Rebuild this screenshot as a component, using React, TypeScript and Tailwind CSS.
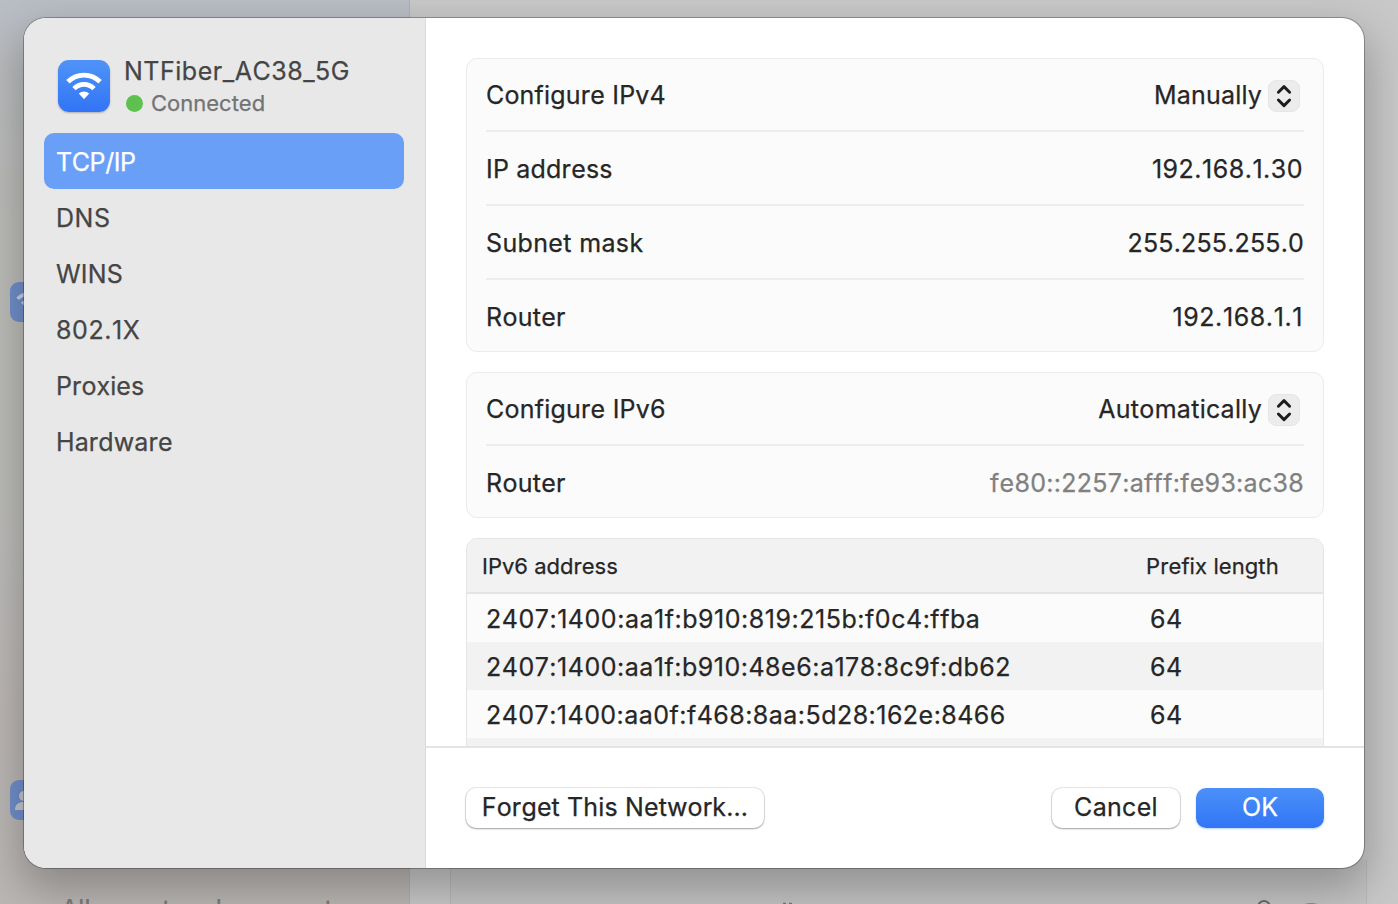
import React from "react";

const WifiGlyph = ({ className }: { className: string }) => (
  <svg viewBox="0 0 52 52" className={className} fill="none">
    <path d="M9.9 21.8C18.9 12.8 33.1 12.8 42.1 21.8" stroke="white" strokeWidth="4.8" />
    <path d="M16 28.6C21.7 23 30.3 23 36 28.6" stroke="white" strokeWidth="4.8" />
    <path d="M20.8 33.6C23.8 30.7 28.2 30.7 31.2 33.6L26.7 38.5Q26 39.1 25.3 38.5Z" fill="white" />
  </svg>
);

const Stepper = () => (
  <span className="flex size-8 translate-y-px items-center justify-center rounded-[8px] border border-[#e6e6e6] bg-[#ececec]">
    <svg viewBox="0 0 32 32" className="size-8 shrink-0" fill="none" stroke="#1c1c1c" strokeWidth="2.9" strokeLinecap="round" strokeLinejoin="round">
      <path d="M10.4 12.2L16 6.6L21.6 12.2M10.4 20L16 25.6L21.6 20" />
    </svg>
  </span>
);

const Row = ({ label, value, valueClass = "", labelClass = "", first, last }: {
  label: string; value: string; valueClass?: string; labelClass?: string; first?: boolean; last?: boolean;
}) => (
  <div className={`flex items-center justify-between ${first ? "h-[73px] border-b-2 border-[#ededed] pt-px" : last ? "h-[73px] pt-px" : "h-[74px] border-b-2 border-[#ededed] pt-[2px]"}`}>
    <span className={labelClass}>{label}</span>
    <span className={`flex items-center gap-[6px] ${first ? "pr-1" : ""}`}>
      <span className={valueClass}>{value}</span>
      {first && <Stepper />}
    </span>
  </div>
);

const NAV = [
  { name: "TCP/IP", cls: "rounded-[10px] bg-[#6a9ff8] text-white tracking-[-0.4px]" },
  { name: "DNS", cls: "tracking-[0.5px]" },
  { name: "WINS", cls: "tracking-[0.2px]" },
  { name: "802.1X", cls: "tracking-[0.6px]" },
  { name: "Proxies", cls: "tracking-[0.05px]" },
  { name: "Hardware", cls: "tracking-[0.1px]" },
];

const ADDRESSES = [
  { ip: "2407:1400:aa1f:b910:819:215b:f0c4:ffba", cls: "tracking-[0.53px]" },
  { ip: "2407:1400:aa1f:b910:48e6:a178:8c9f:db62", cls: "tracking-[0.51px]" },
  { ip: "2407:1400:aa0f:f468:8aa:5d28:162e:8466", cls: "tracking-[0.47px]" },
  { ip: "", cls: "" },
];

export default function App() {
  return (
    <div className="relative h-[904px] w-[1398px] overflow-hidden bg-[#c8c8c8] font-['Inter',sans-serif] text-[25px] leading-8 text-[#262626] [-webkit-text-stroke:0.25px] [font-feature-settings:'calt'_0] [font-kerning:none]">
      <div className="flex h-full">
        <div className="w-[410px] border-r border-[#b0b0b0] bg-[linear-gradient(180deg,#b9bec6_0%,#b9bbbd_8%,#bbbbb8_25%,#bcbbb9_60%,#bbb6b4_80%,#bab7b4_100%)]">
          <div className="ml-[10px] mt-[282px] size-10 rounded-[9px] bg-[#718fca]"><WifiGlyph className="size-10 opacity-60" /></div>
          <div className="ml-[10px] mt-[458px] size-10 overflow-hidden rounded-[9px] bg-[#718fca]">
            <svg viewBox="0 0 40 40" className="size-10" fill="#c3c6cc"><circle cx="14" cy="16" r="5" /><path d="M5 30C5 24 9 22 14 22S23 24 23 30Z" /></svg>
          </div>
          <div className="ml-[61px] mt-[73px] whitespace-nowrap tracking-[0.05px] text-[#7d7a78] [font-kerning:normal]">Allow network connect</div>
        </div>
        <div className="flex flex-1 items-end pl-10">
          <div className="h-[44px] w-[917px] border-x border-[#b8b8b8] bg-[#c4c4c4]">
            <svg viewBox="0 0 915 44" className="h-[44px] w-[915px]" fill="none">
              <path d="M332 43.6h3M338 43.6h3" stroke="#7a7a7a" strokeWidth="1.5" />
              <circle cx="813" cy="47" r="6" stroke="#6b6b6b" strokeWidth="2" />
              <ellipse cx="860" cy="50" rx="12" ry="7" fill="#8c8c8c" />
            </svg>
          </div>
        </div>
      </div>

      <div className="absolute left-6 top-[18px] flex h-[850px] w-[1340px] rounded-[22px] bg-white shadow-[0_0_0_1px_rgba(0,0,0,0.28),0_18px_44px_4px_rgba(0,0,0,0.26)]">
        <aside className="flex w-[402px] flex-col rounded-l-[22px] border-r border-[#dadada] bg-[#e8e8e8] pl-5 pr-[21px] text-[#454545]">
          <div className="flex h-[115px] gap-[14px] pl-[14px] pt-[42px]">
            <div className="size-[52px] rounded-[11px] bg-linear-to-b from-[#4f93f8] to-[#3274f6] shadow-[0_1px_2px_rgba(0,0,0,0.25)]"><WifiGlyph className="size-[52px]" /></div>
            <div className="-mt-[5px]">
              <div className="tracking-[0.52px]">NTFiber_AC38_5G</div>
              <div className="flex items-center gap-[9px] pl-[2px] text-[22px] text-[#737373]"><i className="mt-px size-[17px] rounded-full bg-[#5ec14f]" /><span className="-ml-px">Connected</span></div>
            </div>
          </div>
          {NAV.map((n) => (
            <div key={n.name} className={`flex h-14 items-center px-3 pt-[2px] ${n.cls}`}>{n.name}</div>
          ))}
        </aside>
        <main className="flex min-w-0 flex-1 flex-col">
          <div className="flex h-[730px] flex-col gap-5 overflow-hidden border-b-2 border-[#e4e4e4] px-10 pt-10">
            <section className="h-[294px] shrink-0 rounded-[11px] border border-[#ebebeb] bg-[#fbfbfb] px-[19px]">
              <Row label="Configure IPv4" labelClass="tracking-[0.18px]" value="Manually" valueClass="tracking-[0.2px]" first />
              <Row label="IP address" labelClass="tracking-[0.2px]" value="192.168.1.30" valueClass="mr-px tracking-[0.5px]" />
              <Row label="Subnet mask" labelClass="tracking-[0.36px]" value="255.255.255.0" valueClass="tracking-[0.17px]" />
              <Row label="Router" labelClass="tracking-[0.3px]" value="192.168.1.1" valueClass="mr-px tracking-[0.6px]" last />
            </section>
            <section className="h-[146px] shrink-0 rounded-[11px] border border-[#ebebeb] bg-[#fbfbfb] px-[19px]">
              <Row label="Configure IPv6" labelClass="tracking-[0.22px]" value="Automatically" valueClass="tracking-[0.3px]" first />
              <Row label="Router" labelClass="tracking-[0.3px]" value="fe80::2257:afff:fe93:ac38" valueClass="text-[#808080] tracking-[0.29px]" last />
            </section>
            <section className="h-[260px] shrink-0 overflow-hidden rounded-[11px] border border-[#e4e4e4] bg-[#fbfbfb]">
              <div className="flex h-[55px] items-center border-b-2 border-[#e4e4e4] bg-[#f2f2f2] pl-[15px] text-[22px]">
                <span className="w-[664px]">IPv6 address</span><span className="tracking-[0.08px]">Prefix length</span>
              </div>
              {ADDRESSES.map((a, i) => (
                <div key={i} className="flex h-12 items-center pl-[19px] pt-[2px] even:bg-[#fbfbfb] odd:bg-[#f2f2f2]">
                  <span className={`w-[664px] ${a.cls}`}>{a.ip}</span><span className="tracking-[0.6px]">{a.ip && "64"}</span>
                </div>
              ))}
            </section>
          </div>
          <div className="flex items-center gap-4 px-10 pt-10">
            <button className="mr-auto h-10 w-[298px] rounded-[10px] bg-white pb-[2px] tracking-[0.14px] shadow-[0_0_0_1px_rgba(0,0,0,0.09),0_1px_2px_rgba(0,0,0,0.3)]">Forget This Network...</button>
            <button className="h-10 w-32 rounded-[10px] bg-white pb-[2px] tracking-[0.3px] shadow-[0_0_0_1px_rgba(0,0,0,0.09),0_1px_2px_rgba(0,0,0,0.3)]">Cancel</button>
            <button className="h-10 w-32 rounded-[10px] bg-linear-to-b from-[#4b90f8] to-[#3275f6] pb-[2px] text-white shadow-[0_1px_2px_rgba(50,117,246,0.35)]">OK</button>
          </div>
        </main>
      </div>
    </div>
  );
}
